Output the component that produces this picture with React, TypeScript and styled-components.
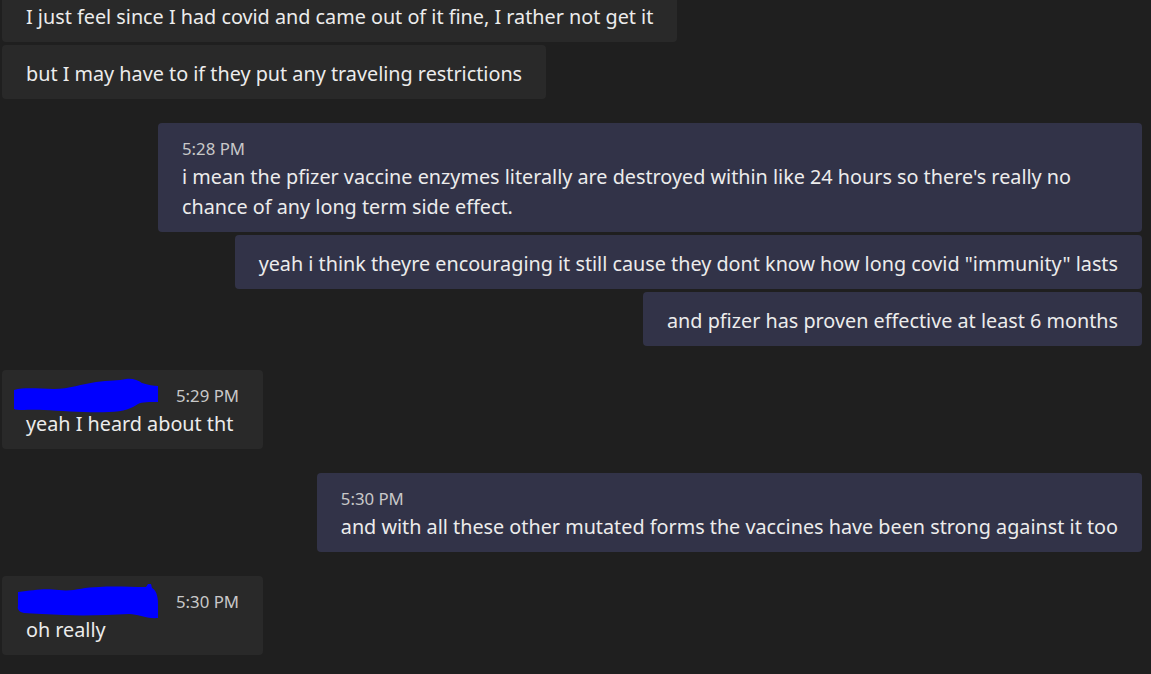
import React from "react";
import styled, { createGlobalStyle } from "styled-components";

const Global = createGlobalStyle`
  html, body { margin: 0; padding: 0; background: #1f1f1f; }
  body { font-family: "Segoe UI", "Noto Sans", "Open Sans", sans-serif; overflow: hidden; }
`;

const Page = styled.div`
  width: 1151px;
  height: 674px;
  overflow: hidden;
  background: #1f1f1f;
`;

const Thread = styled.div`
  display: flex;
  flex-direction: column;
  margin-top: -12px;
  padding: 0 9px 0 2px;
`;

const Group = styled.div<{ $mine?: boolean }>`
  display: flex;
  flex-direction: column;
  align-items: ${(p) => (p.$mine ? "flex-end" : "flex-start")};
  gap: 3px;
  & + & { margin-top: 24px; }
`;

const Bubble = styled.div<{ $mine?: boolean }>`
  box-sizing: border-box;
  max-width: 984px;
  padding: 14px 24px 10px;
  border-radius: 4px;
  background: ${(p) => (p.$mine ? "#323348" : "#292929")};
`;

const Meta = styled.div`
  display: flex;
  align-items: center;
  height: 25px;
  margin-top: -1px;
  margin-bottom: 1px;
`;

const Time = styled.span`
  font-size: 16.8px;
  line-height: 25px;
  color: #c8c8c8;
`;

const Redacted = styled.svg`
  display: block;
  margin-left: -12px;
  margin-right: 16px;
`;

const Text = styled.div`
  font-size: 19.8px;
  line-height: 30px;
  color: #ececec;
`;

const Blob1 = () => (
  <Redacted width="146" height="36" viewBox="0 0 146 36">
    <path
      d="M0 12 C12 9 25 11 40 11 C55 11 68 6 82 4 C95 2 105 3 112 1 C118 0 124 2 128 5 C134 7 140 8 144 8 L144 24 C136 24 128 24 124 26 C118 30 110 34 95 34 C75 35 50 33 30 32 C15 31 5 33 0 31 Z"
      fill="#0000ff"
    />
  </Redacted>
);

const Blob2 = () => (
  <Redacted width="146" height="36" viewBox="0 0 146 36">
    <path
      d="M4 8 C20 6 30 4 45 6 C60 8 68 3 85 3 C100 2 115 3 132 3 L134 0 L137 0 L138 4 C142 6 144 12 144 20 L144 34 C132 35 124 30 115 30 C95 31 70 32 50 31 C35 30 20 30 10 29 C5 28 3 25 4 22 Z"
      fill="#0000ff"
    />
  </Redacted>
);

export default function App() {
  return (
    <Page>
      <Global />
      <Thread>
        <Group>
          <Bubble>
            <Text>I just feel since I had covid and came out of it fine, I rather not get it</Text>
          </Bubble>
          <Bubble>
            <Text>but I may have to if they put any traveling restrictions</Text>
          </Bubble>
        </Group>
        <Group $mine>
          <Bubble $mine>
            <Meta>
              <Time>5:28 PM</Time>
            </Meta>
            <Text>
              i mean the pfizer vaccine enzymes literally are destroyed within like 24 hours so there's really no
              chance of any long term side effect.
            </Text>
          </Bubble>
          <Bubble $mine>
            <Text>yeah i think theyre encouraging it still cause they dont know how long covid "immunity" lasts</Text>
          </Bubble>
          <Bubble $mine>
            <Text>and pfizer has proven effective at least 6 months</Text>
          </Bubble>
        </Group>
        <Group>
          <Bubble>
            <Meta>
              <Blob1 />
              <Time>5:29 PM</Time>
            </Meta>
            <Text>yeah I heard about tht</Text>
          </Bubble>
        </Group>
        <Group $mine>
          <Bubble $mine>
            <Meta>
              <Time>5:30 PM</Time>
            </Meta>
            <Text>and with all these other mutated forms the vaccines have been strong against it too</Text>
          </Bubble>
        </Group>
        <Group>
          <Bubble>
            <Meta>
              <Blob2 />
              <Time>5:30 PM</Time>
            </Meta>
            <Text>oh really</Text>
          </Bubble>
        </Group>
      </Thread>
    </Page>
  );
}
